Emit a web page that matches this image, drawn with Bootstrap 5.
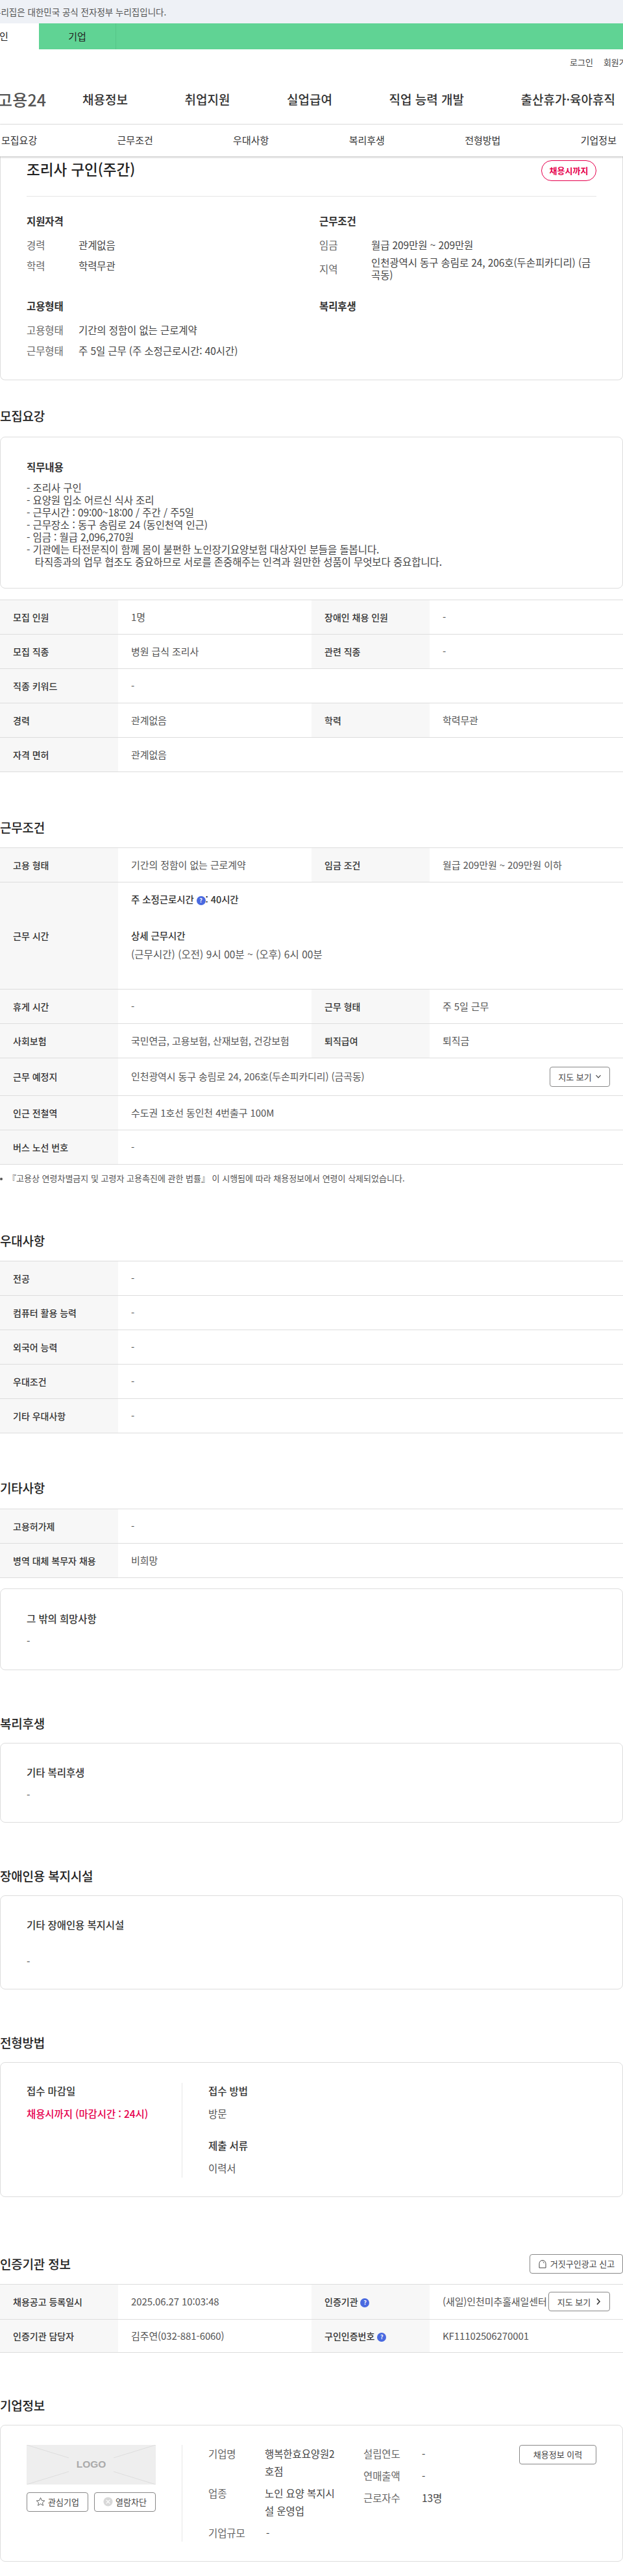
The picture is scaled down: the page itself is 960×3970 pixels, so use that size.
<!DOCTYPE html>
<html lang="ko">
<head>
<meta charset="utf-8">
<title>조리사 구인(주간)</title>
<link href="https://cdn.jsdelivr.net/npm/bootstrap@5.3.0/dist/css/bootstrap.min.css" rel="stylesheet">
<style>
html,body{overflow-x:hidden}
body{font-family:"Noto Sans CJK KR","Liberation Sans",sans-serif;color:#333;font-size:15.5px;letter-spacing:-.1px;width:960px;min-height:3970px;background:#fff}
.gov-bar{height:36px;background:#eef1f6;font-size:13.5px;color:#555;line-height:36px;letter-spacing:0}
.gov-bar span{margin-left:-11px;display:inline-block;white-space:nowrap}
.user-bar{height:40px;background:#60d394;font-size:15px;line-height:40px;letter-spacing:0}
.tab-on{width:60px;background:#fff;color:#222;overflow:hidden;white-space:nowrap}
.tab-on span{display:inline-block;margin-left:-1px}
.tab-off{width:119px;text-align:center;color:#222;border-right:1px solid #56c588}
.util-links{height:40px;font-size:13px;color:#444;padding-left:878px;gap:16px;white-space:nowrap;line-height:40px;letter-spacing:0}
.main-nav{height:76px;font-size:19px;font-weight:500;color:#333;border-bottom:1px solid #e8e8e8;white-space:nowrap;letter-spacing:0}
.logo-txt{font-size:25px;font-weight:500;color:#555;letter-spacing:.2px;margin-left:-4px;width:131px}
.mnav-a{width:157.5px}
.mnav-b{width:203px}
.sub-nav{height:49px;font-size:15px;color:#333;background:#fff;box-shadow:0 1px 3px rgba(0,0,0,.3);position:relative;z-index:2;padding:0 10px 0 2px;letter-spacing:0}
.sect-box{border:1px solid #ddd;border-radius:8px;padding:0 40px;background:#fff}
.top-box{border-top:0;border-radius:0 0 8px 8px;height:345px}
.title-row{height:62px;border-bottom:1px solid #e6e6e6}
.title-txt{font-size:22.5px;font-weight:500;color:#222;margin:8px 0 0;line-height:23px;letter-spacing:0}
.pill-red{width:85px;height:32px;border:1px solid #e6004d;border-radius:16px;color:#e6004d;font-size:13px;font-weight:700;margin-top:6px;letter-spacing:0}
.two-col{display:grid;grid-template-columns:451px 1fr;padding-top:25px}
.sub-h{font-size:15.5px;font-weight:700;color:#333;margin:0;line-height:24px;letter-spacing:-.1px}
.sub-m{font-weight:500}
.kv{display:flex;line-height:19px;color:#444}
.kv-l{width:80px;flex:none;color:#666}
.two-cell{padding-top:26px}
.sect-title{font-size:19px;font-weight:500;color:#222;margin:0;line-height:30px;letter-spacing:-.2px}
.info-table{table-layout:fixed;width:960px;margin:0;border-top:1px solid #ddd;font-size:15px}
.info-table th,.info-table td{padding:0 20px;vertical-align:middle;border-bottom:1px solid #ddd;height:53px;line-height:20px}
.info-table th{background:#f7f7f7;font-weight:500;color:#333;font-size:14px;letter-spacing:0}
.info-table td{color:#555}
.cw-h{width:182px}
.cw-d{width:298px}
.info-table .tall-row th{height:165px}
.info-table .tall-row td{height:165px;padding-top:16px;vertical-align:top}
.info-table .map-row td,.info-table .map-row th{height:57.5px}
.info-table .cert-a td,.info-table .cert-a th{height:54.5px}
.info-table .cert-b td,.info-table .cert-b th{height:50.5px}
.strong-line{font-weight:500;color:#333;font-size:14.5px}
.shift-line{font-size:15.5px;letter-spacing:.05px}
.help-dot{display:inline-flex;width:14px;height:14px;border-radius:50%;background:#4a6ae0;color:#fff;font-size:9px;font-weight:700;align-items:center;justify-content:center;vertical-align:1px;letter-spacing:0}
.note-line{font-size:13px;color:#555;padding-left:12px;position:relative;margin:11px 0 0;line-height:20px;letter-spacing:0}
.note-line::before{content:"";position:absolute;left:0;top:9px;width:4px;height:4px;border-radius:50%;background:#555}
.out-btn{background:#fff;border:1px solid #888;border-radius:4px;color:#444;font-size:13px;height:30px;padding:0;display:inline-flex;align-items:center;justify-content:center;gap:5px;white-space:nowrap;letter-spacing:0;--bs-btn-hover-bg:#fff}
.btn-map{width:93px;height:31px}
.btn-map2{width:95px;gap:8px}
.btn-fake{width:144px}
.btn-co{width:95px;gap:4px}
.btn-hist{width:119px}
.job-lines{white-space:pre-wrap;line-height:19px;color:#444;margin:11px 0 0}
.val-line{line-height:20px;margin-top:12px;color:#555}
.val-line2{line-height:24px;margin-top:11px;color:#555}
.deadline{color:#e6004d;font-weight:500}
.logo-box{width:199px;height:61px;background:#eee;position:relative;color:#aaa;font-weight:700;font-size:15.5px;font-family:"Liberation Sans",sans-serif;letter-spacing:0}
.logo-box svg{position:absolute;inset:0;width:100%;height:100%}
.logo-box span{position:relative;background:#eee;padding:0 12px}
.v-left{width:240px;flex:none;border-right:1px solid #e6e6e6}
.v-a{height:146px}
.v-b{height:149px}
.pane-r{padding-left:40px}
.co-lab{color:#666}
.co-grid{line-height:27px;color:#444}
.w-co1{width:87px}
.w-co2{width:152px;padding-right:44px}
.w-co3{width:90px}
.co-dash{padding-left:2px}
.spacer27{height:27px}
.wd-199{width:199px}
.pr-20{padding-right:20px}
.mt7{margin-top:7px}.mt8{margin-top:8px}.mt12{margin-top:12px}.mt13{margin-top:13px}.mt15{margin-top:15px}.mt16{margin-top:16px}.mt17{margin-top:17px}.mt25{margin-top:25px}.mt34{margin-top:34px}.mt36{margin-top:36px}.mt40{margin-top:40px}.mt66{margin-top:66px}.mt67{margin-top:67px}.mt69{margin-top:69px}.mt70{margin-top:70px}.mt71{margin-top:71px}.mt88{margin-top:88px}
.h234{height:234px;padding-top:33px}
.h126{height:126px;padding-top:33px}
.h123{height:123px;padding-top:32px}
.h145{height:145px;padding-top:32px}
.h208{height:208px;padding-top:31px}
.h211{height:211px;padding-top:30px}
</style>
</head>
<body>
<div class="gov-bar"><span>누리집은 대한민국 공식 전자정부 누리집입니다.</span></div>
<div class="user-bar d-flex"><div class="tab-on"><span>인</span></div><div class="tab-off">기업</div></div>
<div class="util-links d-flex"><span>로그인</span><span>회원가입</span></div>
<nav class="main-nav d-flex align-items-center">
  <div class="logo-txt">고용24</div>
  <div class="mnav-a">채용정보</div><div class="mnav-a">취업지원</div><div class="mnav-a">실업급여</div><div class="mnav-b">직업 능력 개발</div><div>출산휴가·육아휴직</div>
</nav>
<nav class="sub-nav d-flex align-items-center justify-content-between">
  <span>모집요강</span><span>근무조건</span><span>우대사항</span><span>복리후생</span><span>전형방법</span><span>기업정보</span>
</nav>

<section class="sect-box top-box">
  <div class="title-row d-flex justify-content-between align-items-start">
    <h1 class="title-txt">조리사 구인(주간)</h1>
    <div class="pill-red d-flex align-items-center justify-content-center">채용시까지</div>
  </div>
  <div class="two-col">
    <div>
      <h2 class="sub-h">지원자격</h2>
      <div class="kv mt16"><span class="kv-l">경력</span><span>관계없음</span></div>
      <div class="kv mt13"><span class="kv-l">학력</span><span>학력무관</span></div>
    </div>
    <div>
      <h2 class="sub-h">근무조건</h2>
      <div class="kv mt16"><span class="kv-l">임금</span><span>월급 209만원 ~ 209만원</span></div>
      <div class="kv align-items-center mt8"><span class="kv-l">지역</span><span>인천광역시 동구 송림로 24, 206호(두손피카디리) (금곡동)</span></div>
    </div>
    <div class="two-cell">
      <h2 class="sub-h">고용형태</h2>
      <div class="kv mt16"><span class="kv-l">고용형태</span><span>기간의 정함이 없는 근로계약</span></div>
      <div class="kv mt13"><span class="kv-l">근무형태</span><span>주 5일 근무 (주 소정근로시간: 40시간)</span></div>
    </div>
    <div class="two-cell">
      <h2 class="sub-h">복리후생</h2>
    </div>
  </div>
</section>

<h2 class="sect-title mt40">모집요강</h2>
<section class="sect-box h234 mt17">
  <h3 class="sub-h">직무내용</h3>
  <p class="job-lines">- 조리사 구인
- 요양원 입소 어르신 식사 조리
- 근무시간 : 09:00~18:00 / 주간 / 주5일
- 근무장소 : 동구 송림로 24 (동인천역 인근)
- 임금 : 월급 2,096,270원
- 기관에는 타전문직이 함께 몸이 불편한 노인장기요양보험 대상자인 분들을 돌봅니다.
   타직종과의 업무 협조도 중요하므로 서로를 존중해주는 인격과 원만한 성품이 무엇보다 중요합니다.</p>
</section>
<table class="table info-table mt17">
  <colgroup><col class="cw-h"><col class="cw-d"><col class="cw-h"><col class="cw-d"></colgroup>
  <tr><th>모집 인원</th><td>1명</td><th>장애인 채용 인원</th><td>-</td></tr>
  <tr><th>모집 직종</th><td>병원 급식 조리사</td><th>관련 직종</th><td>-</td></tr>
  <tr><th>직종 키워드</th><td colspan="3">-</td></tr>
  <tr><th>경력</th><td>관계없음</td><th>학력</th><td>학력무관</td></tr>
  <tr><th>자격 면허</th><td colspan="3">관계없음</td></tr>
</table>

<h2 class="sect-title mt70">근무조건</h2>
<table class="table info-table mt16">
  <colgroup><col class="cw-h"><col class="cw-d"><col class="cw-h"><col class="cw-d"></colgroup>
  <tr><th>고용 형태</th><td>기간의 정함이 없는 근로계약</td><th>임금 조건</th><td>월급 209만원 ~ 209만원 이하</td></tr>
  <tr class="tall-row"><th>근무 시간</th><td colspan="3"><div class="strong-line">주 소정근로시간 <span class="help-dot">?</span>: 40시간</div><div class="strong-line mt36">상세 근무시간</div><div class="mt8 shift-line">(근무시간) (오전) 9시 00분 ~ (오후) 6시 00분</div></td></tr>
  <tr><th>휴게 시간</th><td>-</td><th>근무 형태</th><td>주 5일 근무</td></tr>
  <tr><th>사회보험</th><td>국민연금, 고용보험, 산재보험, 건강보험</td><th>퇴직급여</th><td>퇴직금</td></tr>
  <tr class="map-row"><th>근무 예정지</th><td colspan="3"><div class="d-flex justify-content-between align-items-center"><span>인천광역시 동구 송림로 24, 206호(두손피카디리) (금곡동)</span><button type="button" class="btn out-btn btn-map">지도 보기 <svg width="10" height="10" viewBox="0 0 10 10" fill="none" stroke="#444" stroke-width="1.2"><path d="M1.5 3.2 5 6.8l3.5-3.6"/></svg></button></div></td></tr>
  <tr><th>인근 전철역</th><td colspan="3">수도권 1호선 동인천 4번출구 100M</td></tr>
  <tr><th>버스 노선 번호</th><td colspan="3">-</td></tr>
</table>
<p class="note-line">『고용상 연령차별금지 및 고령자 고용촉진에 관한 법률』 이 시행됨에 따라 채용정보에서 연령이 삭제되었습니다.</p>

<h2 class="sect-title mt71">우대사항</h2>
<table class="table info-table mt16">
  <colgroup><col class="cw-h"><col class="cw-d"><col class="cw-h"><col class="cw-d"></colgroup>
  <tr><th>전공</th><td colspan="3">-</td></tr>
  <tr><th>컴퓨터 활용 능력</th><td colspan="3">-</td></tr>
  <tr><th>외국어 능력</th><td colspan="3">-</td></tr>
  <tr><th>우대조건</th><td colspan="3">-</td></tr>
  <tr><th>기타 우대사항</th><td colspan="3">-</td></tr>
</table>

<h2 class="sect-title mt69">기타사항</h2>
<table class="table info-table mt17">
  <colgroup><col class="cw-h"><col class="cw-d"><col class="cw-h"><col class="cw-d"></colgroup>
  <tr><th>고용허가제</th><td colspan="3">-</td></tr>
  <tr><th>병역 대체 복무자 채용</th><td colspan="3">비희망</td></tr>
</table>
<section class="sect-box h126 mt16">
  <h3 class="sub-h sub-m">그 밖의 희망사항</h3>
  <div class="val-line">-</div>
</section>

<h2 class="sect-title mt67">복리후생</h2>
<section class="sect-box h123 mt15">
  <h3 class="sub-h sub-m">기타 복리후생</h3>
  <div class="val-line">-</div>
</section>

<h2 class="sect-title mt67">장애인용 복지시설</h2>
<section class="sect-box h145 mt15">
  <h3 class="sub-h sub-m">기타 장애인용 복지시설</h3>
  <div class="val-line mt34">-</div>
</section>

<h2 class="sect-title mt67">전형방법</h2>
<section class="sect-box d-flex h208 mt15">
  <div class="v-left v-a">
    <h3 class="sub-h sub-m">접수 마감일</h3>
    <div class="val-line2 deadline">채용시까지 (마감시간 : 24시)</div>
  </div>
  <div class="pane-r">
    <h3 class="sub-h sub-m">접수 방법</h3>
    <div class="val-line2">방문</div>
    <h3 class="sub-h sub-m mt25">제출 서류</h3>
    <div class="val-line2">이력서</div>
  </div>
</section>

<div class="d-flex justify-content-between align-items-center mt88">
  <h2 class="sect-title">인증기관 정보</h2>
  <button type="button" class="btn out-btn btn-fake">
    <svg width="14" height="14" viewBox="0 0 14 14" fill="none" stroke="#444" stroke-width="1"><path d="M2 13V6.5a5 5 0 0 1 10 0V13Z"/><path d="M7.5 3.6a3 3 0 0 1 1.8 2.4" stroke-width=".9"/></svg>거짓구인광고 신고</button>
</div>
<table class="table info-table mt16">
  <colgroup><col class="cw-h"><col class="cw-d"><col class="cw-h"><col class="cw-d"></colgroup>
  <tr class="cert-a"><th>채용공고 등록일시</th><td>2025.06.27 10:03:48</td><th>인증기관 <span class="help-dot">?</span></th><td class="pe-0"><div class="d-flex align-items-center justify-content-between pr-20"><span class="text-nowrap">(새일)인천미추홀새일센터</span><button type="button" class="btn out-btn btn-map2 flex-shrink-0">지도 보기 <svg width="8" height="12" viewBox="0 0 8 12" fill="none" stroke="#333" stroke-width="1.6"><path d="m2 1.5 4 4.5-4 4.5"/></svg></button></div></td></tr>
  <tr class="cert-b"><th>인증기관 담당자</th><td>김주연(032-881-6060)</td><th>구인인증번호 <span class="help-dot">?</span></th><td>KF11102506270001</td></tr>
</table>

<h2 class="sect-title mt66">기업정보</h2>
<section class="sect-box d-flex h211 mt15">
  <div class="v-left v-b">
    <div class="logo-box d-flex align-items-center justify-content-center"><svg viewBox="0 0 199 61" preserveAspectRatio="none" fill="none" stroke="#ddd"><path d="M0 0 199 61M199 0 0 61"/></svg><span>LOGO</span></div>
    <div class="d-flex justify-content-between mt12 wd-199">
      <button type="button" class="btn out-btn btn-co"><svg width="15" height="15" viewBox="0 0 16 16" fill="none" stroke="#555"><path d="m8 1.5 2 4.4 4.7.5-3.5 3.2 1 4.7L8 11.5l-4.2 2.8 1-4.7L1.3 6.4 6 5.9z"/></svg>관심기업</button>
      <button type="button" class="btn out-btn btn-co"><svg width="15" height="15" viewBox="0 0 16 16"><circle cx="8" cy="8" r="7.5" fill="#d8d8d8"/><path d="m5 5 6 6M11 5l-6 6" stroke="#fff" stroke-width="1.3"/></svg>열람차단</button>
    </div>
  </div>
  <div class="co-grid d-flex flex-grow-1 pane-r">
    <div class="w-co1 co-lab"><div>기업명</div><div class="spacer27"></div><div class="mt7">업종</div><div class="spacer27"></div><div class="mt7">기업규모</div></div>
    <div class="w-co2"><div>행복한효요양원2호점</div><div class="mt7">노인 요양 복지시설 운영업</div><div class="mt7 co-dash">-</div></div>
    <div class="w-co3 co-lab"><div>설립연도</div><div class="mt7">연매출액</div><div class="mt7">근로자수</div></div>
    <div class="flex-grow-1"><div>-</div><div class="mt7">-</div><div class="mt7">13명</div></div>
    <button type="button" class="btn out-btn btn-hist">채용정보 이력</button>
  </div>
</section>
</body>
</html>
